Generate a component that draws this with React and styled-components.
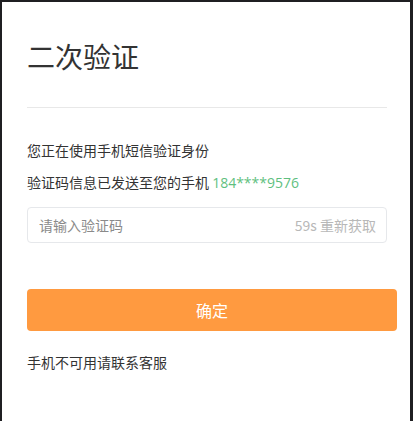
import React from "react";
import styled, { createGlobalStyle } from "styled-components";

const GlobalStyle = createGlobalStyle`
  html, body {
    margin: 0;
    padding: 0;
    background: #1f1f22;
    font-family: "Noto Sans CJK SC", "Noto Sans", sans-serif;
  }
  #root {
    padding: 2px 3px 0 2px;
  }
`;

const Card = styled.div`
  background: #fff;
  min-height: 419px;
  box-sizing: border-box;
  padding: 38px 11px 0 25px;
  display: flex;
  flex-direction: column;
`;

const Title = styled.h1`
  margin: 0;
  font-size: 28px;
  line-height: 32px;
  font-weight: 400;
  color: #333;
`;

const Divider = styled.div`
  height: 1px;
  width: 360px;
  background: #e8e8e8;
  margin-top: 35px;
`;

const Line = styled.p`
  margin: ${(p) => p.top}px 0 0;
  height: 20px;
  font-size: 14px;
  line-height: 20px;
  color: #333;
`;

const Phone = styled.span`
  color: #5fbf7f;
  font-family: "Open Sans", "Noto Sans", sans-serif;
  font-size: 14px;
`;

const InputBox = styled.div`
  margin-top: 15px;
  width: 360px;
  height: 36px;
  box-sizing: border-box;
  border: 1px solid #e6e8eb;
  border-radius: 4px;
  display: flex;
  align-items: center;
  justify-content: space-between;
  padding: 0 10px 0 11px;
`;

const Input = styled.input`
  border: 0;
  outline: none;
  flex: 1;
  font-family: inherit;
  font-size: 14px;
  color: #333;
  background: transparent;
  padding: 0;
  &::placeholder {
    color: #8a8a8a;
  }
`;

const Resend = styled.span`
  font-size: 14px;
  color: #b8b8b8;
  white-space: nowrap;
`;

const Button = styled.button`
  margin-top: 46px;
  width: 370px;
  height: 42px;
  border: 0;
  border-radius: 4px;
  background: #ff9a40;
  color: #fff;
  font-family: inherit;
  font-size: 16px;
  cursor: pointer;
`;

const App = () => (
  <>
    <GlobalStyle />
    <Card>
      <Title>二次验证</Title>
      <Divider />
      <Line top={32}>您正在使用手机短信验证身份</Line>
      <Line top={12}>
        验证码信息已发送至您的手机 <Phone>184****9576</Phone>
      </Line>
      <InputBox>
        <Input placeholder="请输入验证码" />
        <Resend>59s 重新获取</Resend>
      </InputBox>
      <Button>确定</Button>
      <Line top={21}>手机不可用请联系客服</Line>
    </Card>
  </>
);

export default App;
